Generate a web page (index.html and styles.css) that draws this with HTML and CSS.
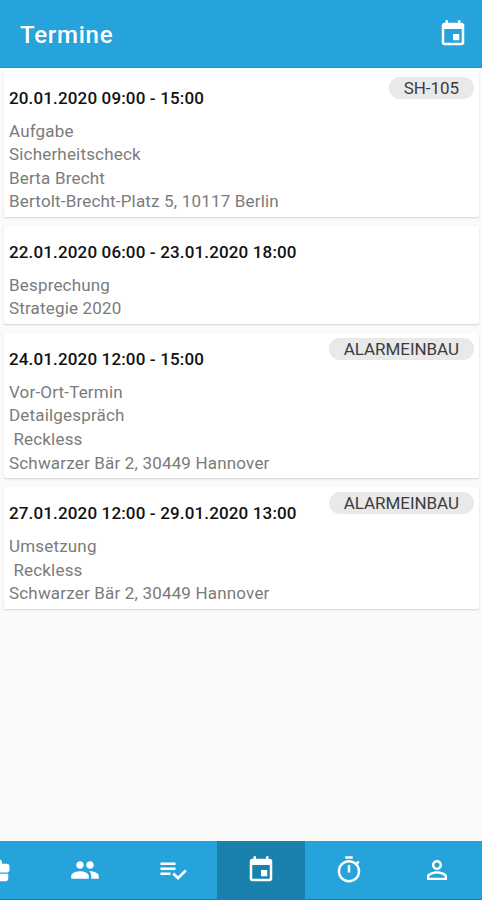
FILE: index.html
```html
<!DOCTYPE html>
<html lang="de">
  <head>
    <meta charset="UTF-8" />
    <meta name="viewport" content="width=device-width, initial-scale=1.0" />
    <title>Termine</title>
    <link rel="stylesheet" href="styles.css">
  </head>

  <body>
    <header class="toolbar">
      <h1>Termine</h1>
      <svg class="icon" viewBox="0 0 24 24">
        <path d="M17 12h-5v5h5v-5zM16 1v2H8V1H6v2H5c-1.11 0-1.99.9-1.99 2L3 19c0 1.1.89 2 2 2h14c1.1 0 2-.9 2-2V5c0-1.1-.9-2-2-2h-1V1h-2zm3 18H5V8h14v11z" />
      </svg>
    </header>

    <main>
      <article class="card">
        <span class="tag">SH-105</span>
        <h2>20.01.2020 09:00 - 15:00</h2>
        <p>Aufgabe</p>
        <p>Sicherheitscheck</p>
        <p>Berta Brecht</p>
        <p>Bertolt-Brecht-Platz 5, 10117 Berlin</p>
      </article>

      <article class="card">
        <h2>22.01.2020 06:00 - 23.01.2020 18:00</h2>
        <p>Besprechung</p>
        <p>Strategie 2020</p>
      </article>

      <article class="card">
        <span class="tag">ALARMEINBAU</span>
        <h2>24.01.2020 12:00 - 15:00</h2>
        <p>Vor-Ort-Termin</p>
        <p>Detailgespräch</p>
        <p>&nbsp;Reckless</p>
        <p>Schwarzer Bär 2, 30449 Hannover</p>
      </article>

      <article class="card">
        <span class="tag">ALARMEINBAU</span>
        <h2>27.01.2020 12:00 - 29.01.2020 13:00</h2>
        <p>Umsetzung</p>
        <p>&nbsp;Reckless</p>
        <p>Schwarzer Bär 2, 30449 Hannover</p>
      </article>
    </main>

    <nav class="tabs">
      <a class="tab">
        <svg class="icon" viewBox="0 0 24 24">
          <path d="M10 16v-1H3.01L3 19c0 1.11.89 2 2 2h14c1.11 0 2-.89 2-2v-4h-7v1h-4zm10-9h-4.01V5l-2-2h-4l-2 2v2H4c-1.1 0-2 .9-2 2v3c0 1.11.89 2 2 2h6v-2h4v2h6c1.1 0 2-.9 2-2V9c0-1.1-.9-2-2-2zm-6 0h-4V5h4v2z" />
        </svg>
      </a>
      <a class="tab">
        <svg class="icon" viewBox="0 0 24 24">
          <path d="M16 11c1.66 0 2.99-1.34 2.99-3S17.66 5 16 5s-3 1.34-3 3 1.34 3 3 3zm-8 0c1.66 0 2.99-1.34 2.99-3S9.66 5 8 5 5 6.34 5 8s1.34 3 3 3zm0 2c-2.33 0-7 1.17-7 3.5V19h14v-2.5c0-2.33-4.67-3.5-7-3.5zm8 0c-.29 0-.62.02-.97.05 1.16.84 1.97 1.97 1.97 3.45V19h6v-2.5c0-2.33-4.67-3.5-7-3.5z" />
        </svg>
      </a>
      <a class="tab">
        <svg class="icon" viewBox="0 0 24 24">
          <path d="M14 10H2v2h12v-2zm0-4H2v2h12V6zM2 16h8v-2H2v2zm19.5-4.5L23 13l-6.99 7-4.51-4.5L13 14l3.01 3 5.49-5.5z" />
        </svg>
      </a>
      <a class="tab active">
        <svg class="icon" viewBox="0 0 24 24">
          <path d="M17 12h-5v5h5v-5zM16 1v2H8V1H6v2H5c-1.11 0-1.99.9-1.99 2L3 19c0 1.1.89 2 2 2h14c1.1 0 2-.9 2-2V5c0-1.1-.9-2-2-2h-1V1h-2zm3 18H5V8h14v11z" />
        </svg>
      </a>
      <a class="tab">
        <svg class="icon" viewBox="0 0 24 24">
          <path d="M15 1H9v2h6V1zm-4 13h2V8h-2v6zm8.03-6.61l1.42-1.42c-.43-.51-.9-.99-1.41-1.41l-1.42 1.42C16.07 4.74 14.12 4 12 4c-4.97 0-9 4.03-9 9s4.02 9 9 9 9-4.03 9-9c0-2.12-.74-4.07-1.97-5.61zM12 20c-3.87 0-7-3.13-7-7s3.13-7 7-7 7 3.13 7 7-3.13 7-7 7z" />
        </svg>
      </a>
      <a class="tab">
        <svg class="icon" viewBox="0 0 24 24">
          <path d="M12 5.9c1.16 0 2.1.94 2.1 2.1s-.94 2.1-2.1 2.1S9.9 9.16 9.9 8s.94-2.1 2.1-2.1m0 9c2.97 0 6.1 1.46 6.1 2.1v1.1H5.9V17c0-.64 3.13-2.1 6.1-2.1M12 4C9.79 4 8 5.79 8 8s1.79 4 4 4 4-1.79 4-4-1.79-4-4-4zm0 9c-2.67 0-8 1.34-8 4v3h16v-3c0-2.66-5.33-4-8-4z" />
        </svg>
      </a>
    </nav>
  </body>
</html>
```
FILE: styles.css
```css
* {
  box-sizing: border-box;
}

body {
  margin: 0;
  height: 100vh;
  display: flex;
  flex-direction: column;
  overflow: hidden;
  background-color: #fafafa;
  font-family: Roboto, "Liberation Sans", sans-serif;
}

.icon {
  display: block;
  flex: none;
  width: 30px;
  height: 30px;
  fill: #fff;
}

.toolbar {
  display: flex;
  align-items: center;
  justify-content: space-between;
  flex: none;
  height: 68px;
  padding: 1px 14px 0 20px;
  border-bottom: 1px solid #1398d4;
  background-color: #26a3da;
  color: #fff;
}

h1 {
  margin: 0;
  padding-top: 2px;
  font-size: 24px;
  font-weight: 500;
  letter-spacing: 0.75px;
}

main {
  display: flex;
  flex: 1;
  flex-direction: column;
  gap: 9px;
  padding: 4px 3px 0 4px;
}

.card {
  position: relative;
  padding: 13.5px 5px 3.1px;
  border-radius: 2px;
  background-color: #fff;
  box-shadow: 0 1px 2px rgba(0, 0, 0, 0.16);
}

h2 {
  margin: 0 0 8.5px;
  font-size: 17px;
  font-weight: 500;
  line-height: 25.7px;
  letter-spacing: 0.15px;
  color: #111;
}

p {
  margin: 0;
  font-size: 17px;
  line-height: 23.6px;
  letter-spacing: 0.18px;
  color: #7b7b7b;
}

.tag {
  position: absolute;
  top: 5px;
  right: 5px;
  padding: 0 15px;
  border-radius: 11px;
  background-color: #e9e9e9;
  color: #3c3c3c;
  font-size: 17px;
  line-height: 22px;
  letter-spacing: -0.05px;
}

.tabs {
  display: flex;
  flex: none;
  height: 59px;
  margin-left: -47px;
  border-bottom: 1px solid #1581b3;
  background-color: #26a3da;
}

.tab {
  display: flex;
  align-items: center;
  justify-content: center;
  flex: none;
  width: 88px;
}

.active {
  background-color: #1a80ae;
}
```
